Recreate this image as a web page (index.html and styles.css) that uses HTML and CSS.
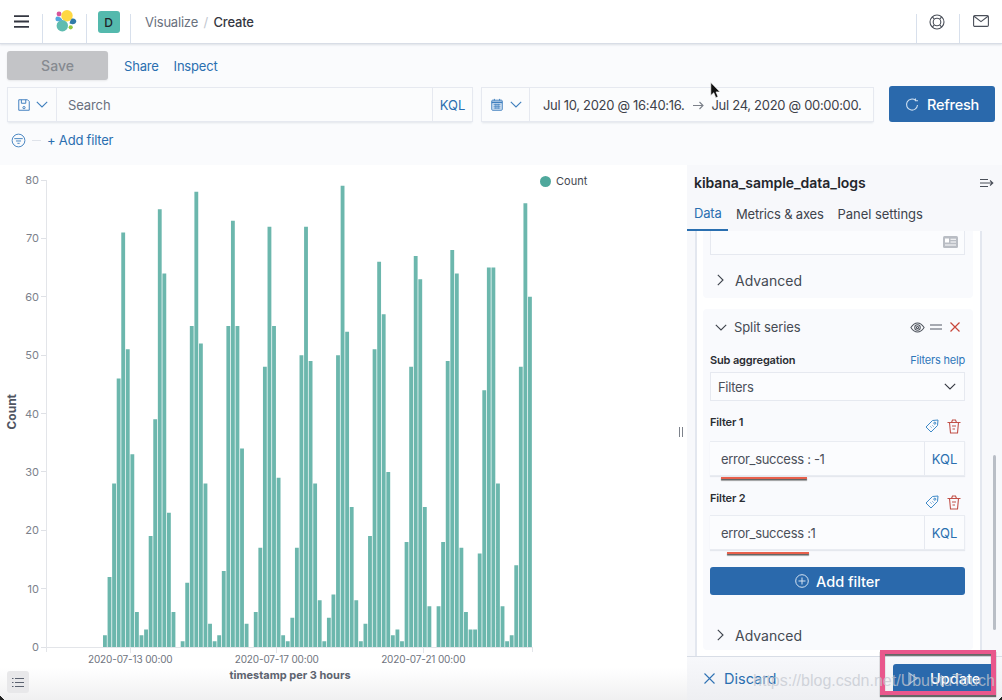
FILE: index.html
```html
<!DOCTYPE html>
<html lang="en">
<head>
<meta charset="utf-8">
<title>Visualize - Create</title>
<link rel="stylesheet" href="styles.css">
</head>
<body>
<div class="page">
  <header class="topbar">
    <div class="nav-cell cell-menu">
      <svg class="ico-menu" viewBox="0 0 15 13"><path d="M0 1.2h15M0 6.5h15M0 11.8h15" stroke="#343741" stroke-width="1.8" fill="none"/></svg>
    </div>
    <div class="nav-cell cell-logo">
      <svg class="ico-logo" viewBox="0 0 24 24"><circle cx="14" cy="6.7" r="5.7" fill="#fed843"/><circle cx="9.3" cy="16.7" r="5.7" fill="#5fbcb0"/><path d="M4.3 7.5c2.8.1 4.600 2 5.200 4-2 .4-4 .8-5.200.8-2.400-.2-2.400-4.800 0-4.800z" fill="#52a8de"/><path d="M19 9.500c2.500-.6 4.500 1.300 4.300 3-.2 2-2.700 3.200-4.700 2.500l-2-.6c.3-1.800 1-3.800 2.400-4.900z" fill="#2f7aa8"/><circle cx="6" cy="5" r="2.400" fill="#d9559a"/><circle cx="17.700" cy="18.300" r="2.100" fill="#93c83e"/></svg>
    </div>
    <div class="nav-cell cell-avatar"><span class="avatar">D</span></div>
    <nav class="crumbs"><span class="crumb">Visualize</span><span class="crumb-sep">/</span><span class="crumb-now">Create</span></nav>
    <div class="nav-cell cell-help">
      <svg class="ico-help" viewBox="0 0 16 16" fill="none" stroke="#4a4f59" stroke-width="1.100"><circle cx="8" cy="8" r="7"/><circle cx="8" cy="8" r="3.800"/><path d="M3.300 2.800l2 2.400M12.700 2.800l-2 2.400M3.300 13.200l2-2.400M12.700 13.200l-2-2.400"/></svg>
    </div>
    <div class="nav-cell cell-mail">
      <svg class="ico-mail" viewBox="0 0 16 12" fill="none" stroke="#4a4f59" stroke-width="1.100"><rect x=".6" y=".6" width="14.800" height="10.800" rx="1.200"/><path d="M1 1.200l7 5.400 7-5.400"/></svg>
    </div>
  </header>

  <section class="toolbar">
    <div class="actions">
      <span class="btn-save">Save</span>
      <a class="link">Share</a>
      <a class="link">Inspect</a>
    </div>
    <div class="query-row">
      <div class="field field-search">
        <div class="seg seg-save">
          <svg class="ico-16" viewBox="0 0 16 16" fill="none" stroke="#3f7fbe" stroke-width="1.100"><path d="M2 2h10l2 2v10H2z"/><path d="M5 2v4h5V2"/><circle cx="8" cy="11" r="1.300"/></svg>
          <svg class="ico-chev" viewBox="0 0 12 7" fill="none" stroke="#3f7fbe" stroke-width="1.100"><path d="M.8.8L6 6l5.200-5.200"/></svg>
        </div>
        <span class="search-text">Search</span>
        <span class="seg seg-kql">KQL</span>
      </div>
      <div class="field field-date">
        <div class="seg seg-cal">
          <svg class="ico-16" viewBox="0 0 16 16"><rect x="2" y="2.500" width="12" height="11.500" rx="1" fill="#dbe8f5" stroke="#3f7fbe" stroke-width="1.100"/><path d="M2 5h12" stroke="#3f7fbe" stroke-width="1.800"/><path d="M4 7.500h8M4 9.500h8M4 11.500h8M6 6.500v6M8 6.500v6M10 6.500v6" stroke="#3f7fbe" stroke-width=".8"/><path d="M5 1v2M11 1v2" stroke="#3f7fbe" stroke-width="1.100"/></svg>
          <svg class="ico-chev" viewBox="0 0 12 7" fill="none" stroke="#3f7fbe" stroke-width="1.100"><path d="M.8.8L6 6l5.200-5.200"/></svg>
        </div>
        <span class="date-text date-from">Jul 10, 2020 @ 16:40:16.</span>
        <svg class="ico-arrow" viewBox="0 0 11 9" fill="none" stroke="#7b8089" stroke-width="1.100"><path d="M0 4.500h10M6.500 1l3.500 3.500L6.500 8"/></svg>
        <span class="date-text">Jul 24, 2020 @ 00:00:00.</span>
      </div>
      <span class="btn-refresh">
        <svg class="ico-refresh" viewBox="0 0 14 14" fill="none" stroke="#cfe0f1" stroke-width="1.100"><path d="M10.500 2.300A5.500 5.500 0 1 0 12.500 7"/><path d="M10.500 .5v2.300H13"/></svg>
        Refresh
      </span>
    </div>
    <div class="filter-row">
      <svg class="ico-filter" viewBox="0 0 16 16" fill="none" stroke="#3f7fbe" stroke-width="1"><circle cx="8" cy="8" r="6.800"/><path d="M3.500 6h9M5.300 8.500h5.400M6.800 11h2.400"/></svg>
      <span class="filter-dash"></span>
      <a class="link link-filter">+ Add filter</a>
    </div>
  </section>

  <main class="workspace">
    <section class="chart">
      <div class="chart-main">
        <div class="y-title"><span>Count</span></div>
        <div class="y-ticks">
          <span class="y-tick">80</span><span class="y-tick">70</span><span class="y-tick">60</span><span class="y-tick">50</span><span class="y-tick">40</span><span class="y-tick">30</span><span class="y-tick">20</span><span class="y-tick">10</span><span class="y-tick">0</span>
        </div>
        <div class="plot">
          <svg class="bars" viewBox="0 0 94 80" preserveAspectRatio="none"><path class="bars-shape" d="M0 80V78h.84V80zM1 80V68h.84V80zM2 80V52h.84V80zM3 80V34h.84V80zM4 80V9h.84V80zM5 80V29h.84V80zM6 80V47h.84V80zM7 80V74h.84V80zM8 80V78h.84V80zM9 80V77h.84V80zM10 80V61h.84V80zM11 80V41h.84V80zM12 80V5h.84V80zM13 80V16h.84V80zM14 80V57h.84V80zM15 80V74h.84V80zM17 80V79h.84V80zM18 80V69h.84V80zM19 80V25h.84V80zM20 80V2h.84V80zM21 80V28h.84V80zM22 80V52h.84V80zM23 80V76h.84V80zM24 80V79h.84V80zM25 80V78h.84V80zM26 80V67h.84V80zM27 80V25h.84V80zM28 80V7h.84V80zM29 80V25h.84V80zM30 80V46h.84V80zM31 80V76h.84V80zM33 80V74h.84V80zM34 80V63h.84V80zM35 80V32h.84V80zM36 80V8h.84V80zM37 80V25h.84V80zM38 80V51h.84V80zM39 80V78h.84V80zM40 80V79h.84V80zM41 80V75h.84V80zM42 80V63h.84V80zM43 80V30h.84V80zM44 80V8h.84V80zM45 80V31h.84V80zM46 80V52h.84V80zM47 80V72h.84V80zM48 80V79h.84V80zM49 80V75h.84V80zM50 80V71h.84V80zM51 80V30h.84V80zM52 80V1h.84V80zM53 80V26h.84V80zM54 80V56h.84V80zM55 80V72h.84V80zM56 80V79h.84V80zM57 80V76h.84V80zM58 80V61h.84V80zM59 80V29h.84V80zM60 80V14h.84V80zM61 80V23h.84V80zM62 80V50h.84V80zM63 80V78h.84V80zM64 80V77h.84V80zM65 80V79h.84V80zM66 80V62h.84V80zM67 80V32h.84V80zM68 80V13h.84V80zM69 80V17h.84V80zM70 80V56h.84V80zM71 80V73h.84V80zM73 80V73h.84V80zM74 80V62h.84V80zM75 80V31h.84V80zM76 80V12h.84V80zM77 80V16h.84V80zM78 80V63h.84V80zM79 80V74h.84V80zM80 80V77h.84V80zM81 80V77h.84V80zM82 80V64h.84V80zM83 80V36h.84V80zM84 80V15h.84V80zM85 80V15h.84V80zM86 80V52h.84V80zM87 80V73h.84V80zM88 80V79h.84V80zM89 80V78h.84V80zM90 80V66h.84V80zM91 80V32h.84V80zM92 80V4h.84V80zM93 80V20h.84V80z"/></svg>
        </div>
        <div class="legend"><span class="legend-dot"></span>Count</div>
      </div>
      <div class="x-ticks">
        <span class="x-tick">2020-07-13 00:00</span><span class="x-tick">2020-07-17 00:00</span><span class="x-tick">2020-07-21 00:00</span>
      </div>
      <div class="x-title">timestamp per 3 hours</div>
      <span class="btn-list">
        <svg class="ico-list" viewBox="0 0 12 11" fill="none" stroke="#5b6270" stroke-width="1.200"><path d="M0 1.500h1.500M3 1.500h9M0 5.500h1.500M3 5.500h9M0 9.500h1.500M3 9.500h9"/></svg>
      </span>
      <span class="resize-handle"></span>
    </section>

    <aside class="panel">
      <div class="panel-head">
        <h2 class="panel-title">kibana_sample_data_logs</h2>
        <svg class="ico-collapse" viewBox="0 0 14 10" fill="none" stroke="#4a4f59" stroke-width="1.100"><path d="M0 1.500h8M0 5h12.500M0 8.500h8M10 2.500L12.800 5 10 7.500"/></svg>
      </div>
      <div class="tabs">
        <span class="tab tab-on">Data</span><span class="tab">Metrics &amp; axes</span><span class="tab">Panel settings</span>
      </div>
      <div class="scroller">
        <div class="form">
          <div class="card card-first">
            <div class="stub">
              <svg class="ico-stub" viewBox="0 0 15 12"><rect width="15" height="12" rx="1.500" fill="#b9bdc4"/><rect x="2" y="2.500" width="4" height="4" fill="#fff"/><path d="M7.500 3.200H13M7.500 6H13M2 9h11" stroke="#fff" stroke-width="1.100"/></svg>
            </div>
            <div class="row-adv row-adv-first">
              <svg class="ico-right" viewBox="0 0 7 12" fill="none" stroke="#3e434c" stroke-width="1.100"><path d="M.8.8L6 6 .8 11.200"/></svg>
              <span>Advanced</span>
            </div>
          </div>
          <div class="card card-split">
            <div class="row-split">
              <svg class="ico-chev ico-chev-dark" viewBox="0 0 12 7" fill="none" stroke="#3e434c" stroke-width="1.100"><path d="M.8.8L6 6l5.200-5.200"/></svg>
              <span class="split-name">Split series</span>
              <svg class="ico-eye" viewBox="0 0 16 12" fill="none" stroke="#4a4f59" stroke-width="1.100"><path d="M.8 6C3 2.500 5.500 1 8 1s5 1.500 7.200 5C13 9.500 10.500 11 8 11S3 9.500.8 6z"/><circle cx="8" cy="6" r="3"/><circle cx="8" cy="6" r="1.200"/></svg>
              <svg class="ico-eq" viewBox="0 0 12 6" fill="none" stroke="#8a8f98" stroke-width="1.500"><path d="M0 1h12M0 5h12"/></svg>
              <svg class="ico-x" viewBox="0 0 10 10" fill="none" stroke="#c8463a" stroke-width="1.200"><path d="M.5.500l9 9M9.500.500l-9 9"/></svg>
            </div>
            <div class="label-row">
              <span class="label">Sub aggregation</span>
              <a class="help">Filters help</a>
            </div>
            <div class="select">
              <span>Filters</span>
              <svg class="ico-chev" viewBox="0 0 12 7" fill="none" stroke="#343741" stroke-width="1.100"><path d="M.8.800L6 6l5.200-5.200"/></svg>
            </div>
            <div class="filter-head">
              <span class="label">Filter 1</span>
              <svg class="ico-tag" viewBox="0 0 14 14" fill="none" stroke="#3f8ac8" stroke-width="1"><path d="M1 8l6.500-6.500L13 1l-.5 5.500L6 13z"/><circle cx="9.800" cy="4.200" r="1"/><path d="M5.500 7.500l1 1M7.500 6.500l1 1"/></svg>
              <svg class="ico-trash" viewBox="0 0 14 15" fill="none" stroke="#c25048" stroke-width="1.100"><path d="M.5 3.500h13M4.500 3.500L5.500 1h3l1 2.500M2.500 3.500l1 10.500h7l1-10.500M5 7h4M5.500 10H8"/></svg>
            </div>
            <div class="kql-input">
              <span class="kql-text">error_success : -1</span>
              <span class="kql-tag">KQL</span>
              <span class="scribble scribble-a"></span>
            </div>
            <div class="filter-head filter-head-two">
              <span class="label">Filter 2</span>
              <svg class="ico-tag" viewBox="0 0 14 14" fill="none" stroke="#3f8ac8" stroke-width="1"><path d="M1 8l6.500-6.500L13 1l-.5 5.500L6 13z"/><circle cx="9.800" cy="4.200" r="1"/><path d="M5.500 7.500l1 1M7.500 6.500l1 1"/></svg>
              <svg class="ico-trash" viewBox="0 0 14 15" fill="none" stroke="#c25048" stroke-width="1.100"><path d="M.5 3.500h13M4.500 3.500L5.500 1h3l1 2.500M2.500 3.500l1 10.500h7l1-10.500M5 7h4M5.500 10H8"/></svg>
            </div>
            <div class="kql-input">
              <span class="kql-text">error_success :1</span>
              <span class="kql-tag">KQL</span>
              <span class="scribble scribble-b"></span>
            </div>
            <div class="btn-add">
              <svg class="ico-plus" viewBox="0 0 14 14" fill="none" stroke="#d6e4f2" stroke-width="1"><circle cx="7" cy="7" r="6.300"/><path d="M7 3.500v7M3.500 7h7"/></svg>
              Add filter
            </div>
            <div class="row-adv row-adv-last">
              <svg class="ico-right" viewBox="0 0 7 12" fill="none" stroke="#3e434c" stroke-width="1.100"><path d="M.8.800L6 6 .8 11.200"/></svg>
              <span>Advanced</span>
            </div>
          </div>
        </div>
        <span class="scrollbar"></span>
      </div>
      <div class="footer">
        <a class="discard">
          <svg class="ico-close" viewBox="0 0 11 11" fill="none" stroke="#2f72b4" stroke-width="1.100"><path d="M.5.500l10 10M10.500.500l-10 10"/></svg>
          Discard
        </a>
        <span class="btn-update">
          <svg class="ico-play" viewBox="0 0 10 13" fill="none" stroke="#a9c6e2" stroke-width="1.100"><path d="M1 1l8 5.500L1 12z"/></svg>
          Update
        </span>
      </div>
    </aside>
  </main>

  <span class="annot-box"></span>
  <span class="watermark">https://blog.csdn.net/UbuntuTouch</span>
  <svg class="cursor" viewBox="0 0 11 17"><path d="M.8.500v13l3-2.800 2 5 2.200-1-2-4.800h4z" fill="#111" stroke="#fff" stroke-width=".6"/></svg>
  <span class="corner corner-left"></span>
  <span class="corner corner-right"></span>
</div>
</body>
</html>
```

FILE: styles.css
```css
* { box-sizing: border-box; }
html, body { margin: 0; padding: 0; }
body { font-family: Inter, "Liberation Sans", sans-serif; color: #343741; background: #fafbfd; }
a { color: inherit; text-decoration: none; }
svg { display: block; flex: none; }

.page { position: relative; width: 1002px; height: 700px; overflow: hidden; background: #fafbfd; }

/* top bar */
.topbar { display: flex; align-items: flex-end; height: 44px; background: #fff; border-bottom: 1px solid #d8dde6; box-shadow: 0 1px 2px rgba(152,162,179,.3); position: relative; }
.nav-cell { height: 29px; display: flex; justify-content: center; border-right: 1px solid #d8e0ec; }
.cell-menu { width: 43px; }
.cell-logo { width: 44px; }
.cell-avatar { width: 44px; }
.cell-help { width: 44px; margin-left: auto; padding-right: 2px; border-left: 1px solid #d8e0ec; border-right: 1px solid #d8e0ec; }
.cell-mail { width: 42px; border-right: 0; }
.ico-menu { width: 15px; height: 13px; margin-top: 1px; }
.ico-logo { width: 24px; height: 24px; margin-top: -5px; }
.avatar { width: 22px; height: 22px; margin-top: -3px; display: flex; align-items: center; justify-content: center; background: #54b9ad; border-radius: 3px; font-size: 12px; font-weight: 500; color: #1f2328; }
.crumbs { display: flex; align-self: center; gap: 5.5px; margin-left: 14px; font-size: 13px; line-height: 16px; letter-spacing: -.2px; }
.crumb { color: #69707d; }
.crumb-sep { color: #c2c7d0; }
.crumb-now { color: #343741; font-weight: 500; }
.ico-help { width: 16px; height: 16px; }
.ico-mail { width: 16px; height: 12px; margin-top: 1px; }

/* toolbar */
.toolbar { height: 121px; padding: 7px 7px 0; }
.actions { display: flex; align-items: center; height: 29px; font-size: 13px; letter-spacing: -.2px; }
.btn-save { display: flex; align-items: center; justify-content: center; width: 101px; height: 29px; margin-right: 16px; background: #c3c4c7; border-radius: 3px; font-size: 14px; font-weight: 500; letter-spacing: 0; color: #868a90; box-shadow: 0 1px 2px rgba(0,0,0,.08); }
.link { color: #2a6fb0; }
.actions .link { margin-right: 15px; }
.query-row { display: flex; align-items: stretch; height: 36px; margin-top: 7px; }
.field { display: flex; align-items: center; height: 35px; background: #fbfcfd; border: 1px solid #e6e9f0; box-shadow: 0 2px 2px -1px rgba(152,162,179,.25); font-size: 13px; }
.field-search { width: 466px; }
.field-date { width: 393px; margin-left: 8px; }
.seg { display: flex; align-items: center; flex: none; height: 100%; }
.seg-save { width: 49px; padding-left: 9px; gap: 5px; border-right: 1px solid #e6e9f0; }
.ico-16 { width: 14px; height: 14px; }
.ico-chev { width: 12px; height: 7px; }
.search-text { flex: 1; padding-left: 11px; letter-spacing: -.1px; color: #69707d; }
.seg-kql { width: 40px; justify-content: center; color: #2a6fb0; border-left: 1px solid #e6e9f0; }
.seg-cal { width: 48px; padding-left: 8px; gap: 6px; border-right: 1px solid #e6e9f0; }
.date-text { flex: none; letter-spacing: -.3px; color: #3d4149; white-space: nowrap; }
.date-from { margin-left: 13px; }
.ico-arrow { width: 11px; height: 9px; margin: 2px 8px 0 8px; }
.btn-refresh { display: flex; align-items: center; justify-content: center; gap: 8px; width: 106px; height: 36px; margin-left: 15px; margin-top: -1px; padding-top: 1px; background: #2a69ac; border-radius: 3px; color: #fff; font-size: 14.500px; letter-spacing: -.2px; font-weight: 500; }
.ico-refresh { width: 14px; height: 14px; }
.filter-row { display: flex; align-items: center; height: 20px; margin-top: 7px; padding-left: 4px; font-size: 13px; letter-spacing: -.2px; }
.ico-filter { width: 15px; height: 15px; }
.filter-dash { width: 9px; height: 1px; margin: 0 6px 0 6px; background: #dfe3ea; }

/* workspace */
.workspace { display: flex; height: 535px; }
.chart { position: relative; width: 687px; height: 535px; padding-top: 15px; background: linear-gradient(#fff 94%, #f0f0f1 100%); }
.chart-main { display: flex; height: 468px; }
.y-title { width: 23px; height: 467px; display: flex; align-items: flex-end; justify-content: center; padding-bottom: 217px; }
.y-title span { writing-mode: vertical-rl; transform: rotate(180deg); font-size: 12px; font-weight: 700; color: #4f5561; }
.y-ticks { width: 23px; height: 467px; display: flex; flex-direction: column; justify-content: space-between; align-items: flex-end; }
.y-tick { display: flex; align-items: center; height: 0; font-size: 11px; color: #7c818b; }
.y-tick::after { content: ""; width: 5px; height: 1px; margin-left: 2px; background: #dfe1e6; }
.plot { position: relative; display: flex; align-items: flex-end; width: 487px; height: 468px; padding-left: 56px; border-left: 1px solid #e3e5e9; border-bottom: 1px solid #e3e5e9; }
.plot::before, .plot::after { content: ""; position: absolute; bottom: -5px; width: 1px; height: 5px; background: #e3e5e9; }
.plot::before { left: -1px; }
.plot::after { right: 0; }
.bars { width: 429.6px; height: 467px; }
.bars-shape { fill: #6cb7ad; }
.legend { display: flex; align-items: center; height: 14px; margin: -6px 0 0 7px; font-size: 11px; color: #43474f; }
.legend-dot { width: 11px; height: 11px; margin-right: 5px; border-radius: 50%; background: #4fa89c; }
.x-ticks { display: grid; grid-template-columns: repeat(3, 146.5px); width: 440px; margin-left: 57px; }
.x-tick { display: flex; flex-direction: column; align-items: center; font-size: 10px; letter-spacing: -.15px; line-height: 13px; color: #6f747e; }
.x-tick::before { content: ""; width: 1px; height: 5px; background: #e3e5e9; }
.x-title { width: 580px; margin-top: 2px; text-align: center; font-size: 11px; line-height: 14px; font-weight: 700; color: #5d636f; }
.btn-list { position: absolute; left: 7px; bottom: 7px; display: flex; align-items: center; justify-content: center; width: 22px; height: 22px; background: #e8e8ea; border-radius: 3px; }
.ico-list { width: 12px; height: 11px; }
.resize-handle { position: absolute; left: 679px; top: 262px; width: 4px; height: 10px; border-left: 1px solid #7d828b; border-right: 1px solid #7d828b; }

/* panel */
.panel { display: flex; flex-direction: column; width: 315px; height: 535px; background: #f7f8fb; }
.panel-head { display: flex; align-items: center; justify-content: space-between; height: 35px; padding: 0 8px 0 7px; }
.panel-title { margin: 0; font-size: 14px; line-height: 18px; font-weight: 600; letter-spacing: -.05px; color: #23262c; }
.ico-collapse { width: 14px; height: 10px; }
.tabs { display: flex; height: 31px; }
.tab { display: flex; align-items: center; padding: 0 6px 3px 7px; font-size: 13px; letter-spacing: -.2px; color: #3e434c; }
.tab:last-child { margin-left: 1px; letter-spacing: -.05px; }
.tab-on { width: 41px; padding-left: 7px; margin-right: 1px; color: #2a6fb0; border-bottom: 2px solid #2a6fb0; }
.scroller { position: relative; flex: 1; min-height: 0; overflow: hidden; }
.form { width: 287px; height: 100%; margin-left: 8px; padding: 0 6px; background: #fff; border-left: 2px solid #e3e7ef; border-right: 2px solid #e3e7ef; }
.card { width: 270px; padding: 0 8px 0 7px; background: #f9fafd; border-radius: 4px; }
.card-first { height: 67px; border-radius: 0 0 4px 4px; }
.card-split { height: 341px; margin-top: 11px; padding-top: 8px; }
.stub { display: flex; justify-content: flex-end; align-items: center; height: 24px; padding: 0 6px 1px; background: #fbfcfe; border: 1px solid #e6e9f0; border-top: 0; }
.ico-stub { width: 15px; height: 12px; }
.row-adv { display: flex; align-items: center; gap: 11px; padding-left: 7px; font-size: 14px; color: #454a53; }
.row-adv-first { height: 20px; margin-top: 15px; }
.row-adv-last { height: 20px; margin-top: 30px; }
.ico-right { width: 7px; height: 12px; }
.row-split { display: flex; align-items: center; height: 20px; padding-left: 5px; font-size: 13px; letter-spacing: -.1px; color: #454a53; }
.ico-chev-dark { margin-top: 1px; }
.split-name { flex: 1; margin-left: 7px; }
.ico-eye { width: 15px; height: 11px; }
.ico-eq { width: 12px; height: 6px; margin-left: 5px; }
.ico-x { width: 10px; height: 10px; margin: 0 5px 0 8px; }
.label-row { display: flex; align-items: center; justify-content: space-between; height: 16px; margin-top: 15px; }
.label { font-size: 11px; font-weight: 600; letter-spacing: -.15px; color: #2a2d33; }
.help { font-size: 11px; letter-spacing: -.2px; color: #2f77ba; }
.select { display: flex; align-items: center; justify-content: space-between; height: 29px; margin-top: 4px; padding: 0 8px 0 7px; background: #fbfcfe; border: 1px solid #e6e9f0; font-size: 13px; letter-spacing: -.3px; color: #4a4f59; }
.filter-head { display: flex; align-items: center; height: 20px; margin-top: 11px; }
.filter-head .label { flex: 1; margin-top: -1px; }
.filter-head-two { margin-top: 12px; }
.ico-tag { width: 14px; height: 14px; margin-top: 8px; }
.ico-trash { width: 14px; height: 15px; margin: 8px 4px 0 8px; }
.kql-input { position: relative; display: flex; align-items: center; height: 35px; margin-top: 9px; background: #fbfcfe; border: 1px solid #e9ecf2; border-left: 0; box-shadow: 0 1px 1px rgba(152,162,179,.2); font-size: 13px; }
.filter-head-two + .kql-input { margin-top: 7px; }
.kql-text { flex: 1; padding-left: 11px; letter-spacing: -.3px; color: #4a4f59; }
.kql-tag { display: flex; align-items: center; justify-content: center; width: 40px; height: 100%; border-left: 1px solid #e6e9f0; color: #2a6fb0; }
.scribble { position: absolute; height: 2px; background: #e8604c; box-shadow: 0 1.500px 1px #555; }
.scribble-a { left: 11px; top: 35px; width: 86px; }
.scribble-b { left: 17px; top: 36px; width: 82px; }
.btn-add { display: flex; align-items: center; justify-content: center; gap: 7px; height: 28px; margin-top: 17px; background: #2a69ac; border-radius: 3px; color: #fff; font-size: 14.500px; font-weight: 500; }
.ico-plus { width: 14px; height: 14px; }
.scrollbar { position: absolute; left: 306px; top: 224px; width: 3px; height: 175px; background: #b9bec6; border-radius: 2px; }

.footer { display: flex; align-items: center; justify-content: space-between; flex: none; height: 44px; padding: 0 11px 0 17px; border-top: 1px solid #d8dde6; background: linear-gradient(#f7f8fb, #eeeff2); }
.discard { display: flex; align-items: center; gap: 9px; font-size: 14.500px; color: #2a6fb0; }
.ico-close { width: 11px; height: 11px; }
.btn-update { display: flex; align-items: center; gap: 12px; width: 98px; height: 29px; padding-left: 15px; background: #2a69ac; border-radius: 3px 0 0 0; color: #fff; font-size: 14.500px; font-weight: 500; }
.ico-play { width: 10px; height: 13px; }

/* overlays */
.annot-box { position: absolute; left: 880px; top: 650px; width: 116px; height: 45px; border: solid #e9578c; border-width: 4px 5px 4px 5px; box-shadow: 0 2px 1px #666, inset 0 2px 1px #666; }
.watermark { position: absolute; left: 753px; top: 671px; font-family: "Liberation Sans", sans-serif; font-size: 16px; line-height: 20px; color: rgba(196,200,208,.75); white-space: nowrap; }
.cursor { position: absolute; left: 710px; top: 82px; width: 11px; height: 17px; }
.corner { position: absolute; bottom: 0; width: 4px; height: 4px; }
.corner-left { left: 0; background: linear-gradient(45deg, #222 50%, transparent 50%); }
.corner-right { right: 0; background: linear-gradient(-45deg, #222 50%, transparent 50%); }
```
